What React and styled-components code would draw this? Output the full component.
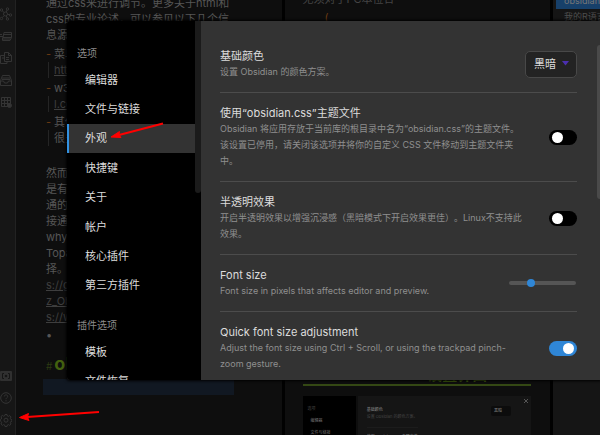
import React from "react";
import styled, { createGlobalStyle, css } from "styled-components";

const GlobalStyle = createGlobalStyle`
  *, *::before, *::after { box-sizing: border-box; }
  html, body, #root { height: 100%; }
  body {
    margin: 0;
    overflow: hidden;
    background: #010101;
    color: #565656;
    font-family: Inter, "Noto Sans CJK SC", sans-serif;
    font-size: 11px;
    line-height: 16px;
    text-spacing-trim: space-all;
  }
  button, select, input { font: inherit; color: inherit; margin: 0; }
`;

const App = styled.div`
  position: relative;
  display: flex;
  height: 100%;
  overflow: hidden;
`;

const Ribbon = styled.nav`
  flex: none;
  width: 16px;
  display: flex;
  flex-direction: column;
  justify-content: space-between;
  padding: 7px 0 8px;
  background: #161616;
  border-right: 1px solid #222;
`;

const RibbonGroup = styled.div`
  display: flex;
  flex-direction: column;
  gap: 8px;
`;

const RibbonButton = styled.button`
  display: block;
  width: 12px;
  height: 14px;
  padding: 0;
  border: 0;
  background: none;
  color: #343434;
  svg { display: block; width: 12px; height: 14px; }
`;

const Workspace = styled.div`
  flex: 1;
  min-width: 0;
  display: grid;
  grid-template-columns: 266fr 266fr 47fr;
  gap: 3px;
`;

const Pane = styled.section`
  min-width: 0;
  overflow: hidden;
  background: #0e0e0e;
`;

const Editor = styled(Pane)`
  padding: 0 30px;
  white-space: nowrap;
`;

const Block = styled.div`
  margin-top: ${(p) => p.$gap || 0}px;
`;

const ListItem = styled.div`
  position: relative;
  padding-left: 8px;
  margin-top: 2px;
  &::before {
    content: "-";
    position: absolute;
    left: 0;
    color: #6b3a12;
  }
`;

const Nested = styled.div`
  margin-left: 2px;
  padding-left: 5px;
  border-left: 1px solid #252525;
`;

const NoteLink = styled.a`
  color: #3e3e3e;
  text-decoration: underline;
`;

const NoteHeading = styled.h1`
  margin: 8px 0 0;
  color: #43600f;
  font-size: 18px;
  line-height: 26px;
  font-weight: 700;
  span { font-size: 10px; font-weight: 400; margin-right: 2px; color: #2c3a12; }
`;

const ActiveLine = styled.div`
  height: 16px;
  margin: 0 18px 0 -3px;
  background: #111822;
`;

const Preview = styled(Pane)`
  display: flex;
  flex-direction: column;
  justify-content: space-between;
  padding: 0 19px 0 18px;
`;

const PreviewText = styled.div`
  margin-top: -10px;
  color: #444;
  line-height: 18px;
  p { margin: 0; }
  p + p { padding-left: 22px; }
  i { color: #6b3a12; font-style: normal; }
`;

const PreviewTitle = styled.h2`
  margin: 0 0 10px;
  padding-left: 62px;
  border-bottom: 2px solid #344814;
  color: #43600f;
  font-size: 15px;
  line-height: 18px;
`;

const Thumb = styled.div`
  display: grid;
  grid-template-columns: 53fr 173fr;
  gap: 2px;
  height: 39px;
  font-size: 4px;
  line-height: 12px;
  color: #444;
`;

const ThumbNav = styled.div`
  padding: 7px 0 0 5px;
  background: #000;
  overflow: hidden;
  div + div { padding-left: 3px; color: #777; }
`;

const ThumbBody = styled.div`
  display: flex;
  justify-content: space-between;
  padding: 10px 2px 0 9px;
  background: #151515;
  line-height: 7px;
  overflow: hidden;
  white-space: nowrap;
  b { display: block; color: #888; font-weight: 400; }
  hr { margin: 7px 0 5px; border: 0; border-top: 1px solid #1c1c1c; }
`;

const ThumbControls = styled.div`
  display: flex;
  gap: 12px;
  align-items: flex-start;
  svg { width: 6px; height: 6px; margin-top: -8px; }
`;

const ThumbSelect = styled.div`
  width: 20px;
  height: 10px;
  padding: 1px 3px;
  border-radius: 2px;
  background: #0c0c0c;
  color: #888;
`;

const Outline = styled(Pane)`
  padding-left: 3px;
  background: #151515;
  white-space: nowrap;
  font-size: 9px;
`;

const OutlineItem = styled.div`
  padding-left: 8px;
  color: #4d4d4d;
  ${(p) =>
    p.$active &&
    css`
      height: 9px;
      line-height: 2px;
      background: #17406a;
      color: #777;
    `}
`;

const Modal = styled.div`
  position: absolute;
  inset: 21px 0 55px 67px;
  display: flex;
  overflow: hidden;
  border-radius: 3px 0 0 3px;
  background: #333;
  box-shadow: 0 0 3px 1px #000;
`;

const Sidebar = styled.nav`
  position: relative;
  flex: none;
  width: 134px;
  overflow: hidden;
  background: #000;
  color: #dcdcdc;
`;

const Thumbbar = styled.div`
  position: absolute;
  top: ${(p) => p.$top}px;
  right: 0;
  width: ${(p) => p.$width}px;
  height: ${(p) => p.$height}px;
  border-radius: ${(p) => p.$radius};
  background: ${(p) => p.$color};
`;

const GroupTitle = styled.h3`
  margin: 0;
  padding: ${(p) => p.$top}px 0 4px 10px;
  color: #8b8b8b;
  font-size: 10px;
  font-weight: 400;
`;

const TabList = styled.div`
  display: grid;
  grid-auto-rows: 1fr;
  min-height: ${(p) => p.$min}px;
`;

const Tab = styled.button`
  padding: 0 0 0 16px;
  border: 0;
  border-left: 2px solid ${(p) => (p.$active ? "#3291e0" : "transparent")};
  background: ${(p) => (p.$active ? "#333" : "none")};
  min-height: 29px;
  text-align: left;
`;

const Settings = styled.main`
  flex: 1;
  min-width: 0;
  overflow: hidden;
  padding: 15px 23px 0 19px;
`;

const Setting = styled.div`
  display: flex;
  align-items: center;
  justify-content: space-between;
  padding: 12px 0;
  & + & { border-top: 1px solid #4c4c4c; }
`;

const SettingText = styled.label`
  flex: 1;
  min-width: 0;
  white-space: nowrap;
`;

const SettingName = styled.span`
  display: block;
  color: #dcdcdc;
`;

const SettingDesc = styled.span`
  display: block;
  color: #8f8f8f;
  font-size: 9px;
`;

const SelectBox = styled.span`
  position: relative;
  flex: none;
  display: block;
  margin: -4px 0;
  svg {
    position: absolute;
    right: 8px;
    top: 10px;
    width: 7px;
    height: 5px;
    pointer-events: none;
  }
`;

const Select = styled.select`
  appearance: none;
  display: block;
  width: 52px;
  height: 27px;
  padding: 0 0 0 8px;
  border: 1px solid #484848;
  border-radius: 5px;
  background: #232323;
  color: #dcdcdc;
`;

const Toggle = styled.input`
  appearance: none;
  flex: none;
  width: 28px;
  height: 15px;
  padding: 2px 3px;
  border-radius: 8px;
  background: #000;
  display: flex;
  justify-content: flex-start;
  &::before {
    content: "";
    width: 11px;
    height: 11px;
    border-radius: 50%;
    background: #fff;
  }
  &:checked { background: #2f86d6; justify-content: flex-end; }
`;

const Slider = styled.input`
  appearance: none;
  flex: none;
  width: 67px;
  height: 4px;
  margin-right: 1px;
  border-radius: 2px;
  background: #555;
  &::-webkit-slider-thumb {
    appearance: none;
    width: 8px;
    height: 8px;
    border-radius: 50%;
    background: #2f86d6;
  }
`;

const Arrows = styled.svg`
  position: absolute;
  left: 0;
  top: 0;
  pointer-events: none;
`;

const stroke = { fill: "none", stroke: "currentColor", strokeWidth: 1 };

const icons = {
  graph: (
    <g {...stroke}>
      <circle cx="5.5" cy="7" r="2" />
      <circle cx="1.5" cy="3" r="1.2" />
      <circle cx="7.5" cy="2" r="1.2" />
      <circle cx="10.5" cy="8" r="1.2" />
      <circle cx="1.5" cy="11.5" r="1.2" />
      <circle cx="7.5" cy="12" r="1.2" />
      <path d="M2.3 4l2 1.6M7 3.1L6.2 5M7.6 7.3l1.7.4M4.2 8.6l-2 2M6.3 9l.8 2" />
    </g>
  ),
  switcher: (
    <g {...stroke}>
      <path d="M4 3.5h7.5v5H3zM3 5.5h8M0 7.5h3M0 5.5h2M2.5 8.500v3H10l1.500-3M3 10h7" />
    </g>
  ),
  files: (
    <g {...stroke}>
      <path d="M4.5 1.5h4l3 3v6h-7zM8.5 1.5v3h3M.5 4.5h4M.5 4.5v8h6.5v-2M2 7h2M6 6.5h3M6 8.5h3" />
    </g>
  ),
  inbox: (
    <g {...stroke}>
      <path d="M2.5 2.5h7l2 5v5H.5v-5zM.5 8h3l1 2h3l1-2h3M2 5h8M2 6.5h8" />
    </g>
  ),
  table: (
    <g {...stroke}>
      <path d="M1.5 2.5h9v9h-9zM1.5 5.5h9M1.5 8.5h9M4.5 2.5v9M7.5 2.5v9" />
      <circle cx="9.5" cy="10.5" r="2" fill="currentColor" />
    </g>
  ),
  vault: (
    <g>
      <rect x="0" y="2" width="12" height="10" rx="1" fill="#303030" />
      <path d="M4 4.5H2.5v5H4M8 4.5h1.5v5H8" fill="none" stroke="#151515" />
      <circle cx="6" cy="7" r="1.3" fill="#151515" />
    </g>
  ),
  help: (
    <g {...stroke}>
      <circle cx="6" cy="7" r="5.3" />
      <path d="M4.3 5.5c0-2.3 3.5-2 3.4 0 0 1.2-1.7 1.2-1.7 2.7M6 9.2v1.2" />
    </g>
  ),
  gear: (
    <g {...stroke}>
      <path d="M5 1.5h2l.4 1.5 1 .4 1.3-.8 1.400 1.400-.8 1.300.4 1 1.200.4v1.600l-1.200.4-.4 1 .8 1.300-1.400 1.400-1.300-.8-1 .4-.4 1.500H5l-.4-1.500-1-.4-1.300.8L.9 11l.8-1.300-.4-1L.3 8V6.400l1-.4.4-1L.9 3.700 2.300 2.400l1.300.8 1-.4z" />
      <circle cx="6" cy="7.2" r="2" />
    </g>
  ),
};

function RibbonIcon({ name, label }) {
  return (
    <RibbonButton type="button" aria-label={label}>
      <svg viewBox="0 0 12 14">{icons[name]}</svg>
    </RibbonButton>
  );
}

function SettingRow({ id, name, lines, children }) {
  return (
    <Setting>
      <SettingText htmlFor={id}>
        <SettingName>{name}</SettingName>
        {lines.map((line) => (
          <SettingDesc key={line}>{line}</SettingDesc>
        ))}
      </SettingText>
      {children}
    </Setting>
  );
}

const tabs = ["编辑器", "文件与链接", "外观", "快捷键", "关于", "帐户", "核心插件", "第三方插件"];
const pluginTabs = ["模板", "文件恢复"];

export default function SettingsScreen() {
  return (
    <App>
      <GlobalStyle />
      <Ribbon>
        <RibbonGroup>
          <RibbonIcon name="graph" label="关系图谱" />
          <RibbonIcon name="switcher" label="快速切换" />
          <RibbonIcon name="files" label="模板" />
          <RibbonIcon name="inbox" label="收件箱" />
          <RibbonIcon name="table" label="表格" />
        </RibbonGroup>
        <RibbonGroup>
          <RibbonIcon name="vault" label="打开其他库" />
          <RibbonIcon name="help" label="帮助" />
          <RibbonIcon name="gear" label="设置" />
        </RibbonGroup>
      </Ribbon>

      <Workspace>
        <Editor>
          <Block $gap={-5}>
            <div>通过css来进行调节。更多关于html和</div>
            <div>css的专业论述，可以参见以下几个信</div>
            <div>息源</div>
          </Block>
          <Block $gap={3}>
            <ListItem>菜鸟</ListItem>
            <Nested><NoteLink href="#runoob">https</NoteLink></Nested>
            <ListItem>w3c</ListItem>
            <Nested><NoteLink href="#w3c">l.com</NoteLink></Nested>
            <ListItem>其他</ListItem>
            <Nested>很多</Nested>
          </Block>
          <Block $gap={19}>
            <div>然而</div>
            <div>是有</div>
            <div>通的</div>
            <div>接通</div>
            <div>why</div>
            <div>Topa</div>
            <div>择。</div>
            <NoteLink href="#g">s://g</NoteLink><br />
            <NoteLink href="#z">z_Ob</NoteLink><br />
            <NoteLink href="#w">s://w</NoteLink>
          </Block>
          <Block $gap={2}>•</Block>
          <NoteHeading><span>#</span>obsidian</NoteHeading>
          <ActiveLine />
        </Editor>

        <Preview>
          <PreviewText>
            <p>无须对于PC本位合</p>
            <p><i>(</i></p>
          </PreviewText>
          <div>
            <PreviewTitle>obsidian设置界面</PreviewTitle>
            <Thumb>
              <ThumbNav>
                <div>选项</div>
                <div>编辑器</div>
                <div>文件与链接</div>
              </ThumbNav>
              <ThumbBody>
                <div>
                  <b>基础颜色</b>
                  设置 Obsidian 的颜色方案。
                  <hr />
                  <b>使用“obsidian.css”主题文件</b>
                </div>
                <ThumbControls>
                  <ThumbSelect>黑暗</ThumbSelect>
                  <svg viewBox="0 0 6 6"><path d="M1 1l4 4M5 1L1 5" stroke="#555" /></svg>
                </ThumbControls>
              </ThumbBody>
            </Thumb>
          </div>
        </Preview>

        <Outline>
          <OutlineItem $active>obsidian主题</OutlineItem>
          <OutlineItem>我的R语言</OutlineItem>
        </Outline>
      </Workspace>

      <Modal role="dialog" aria-label="设置">
        <Sidebar>
          <GroupTitle $top={24}>选项</GroupTitle>
          <TabList $min={235}>
            {tabs.map((t) => (
              <Tab key={t} type="button" $active={t === "外观"}>{t}</Tab>
            ))}
          </TabList>
          <GroupTitle $top={17}>插件选项</GroupTitle>
          <TabList $min={58}>
            {pluginTabs.map((t) => (
              <Tab key={t} type="button">{t}</Tab>
            ))}
          </TabList>
          <Thumbbar $top={0} $width={6} $height={172} $radius="0 0 3px 3px" $color="#1b1b1b" />
        </Sidebar>
        <Settings>
          <SettingRow id="scheme" name="基础颜色" lines={["设置 Obsidian 的颜色方案。"]}>
            <SelectBox>
              <Select id="scheme" defaultValue="dark">
                <option value="dark">黑暗</option>
                <option value="light">明亮</option>
              </Select>
              <svg viewBox="0 0 7 5"><path d="M0 0h7L3.5 4.5z" fill="#4b2fb0" /></svg>
            </SelectBox>
          </SettingRow>
          <SettingRow
            id="theme"
            name="使用“obsidian.css”主题文件"
            lines={[
              "Obsidian 将应用存放于当前库的根目录中名为“obsidian.css”的主题文件。",
              "该设置已停用，请关闭该选项并将你的自定义 CSS 文件移动到主题文件夹",
              "中。",
            ]}
          >
            <Toggle id="theme" type="checkbox" />
          </SettingRow>
          <SettingRow
            id="translucent"
            name="半透明效果"
            lines={["开启半透明效果以增强沉浸感（黑暗模式下开启效果更佳）。Linux不支持此", "效果。"]}
          >
            <Toggle id="translucent" type="checkbox" />
          </SettingRow>
          <SettingRow id="size" name="Font size" lines={["Font size in pixels that affects editor and preview."]}>
            <Slider id="size" type="range" min="10" max="30" defaultValue="16" />
          </SettingRow>
          <SettingRow
            id="quick"
            name="Quick font size adjustment"
            lines={["Adjust the font size using Ctrl + Scroll, or using the trackpad pinch-", "zoom gesture."]}
          >
            <Toggle id="quick" type="checkbox" defaultChecked />
          </SettingRow>
        </Settings>
        <Thumbbar $top={24} $width={3} $height={154} $radius="3px 0 0 3px" $color="#4a4a4a" />
      </Modal>

      <Arrows width="170" height="435" viewBox="0 0 170 435" aria-hidden="true">
        <g fill="#f00" stroke="#f00">
          <path d="M163 123.5L119 135" strokeWidth="2" />
          <path d="M111 137l8.5-5.5-.5 3.5 2 2.5z" strokeWidth="1" />
          <path d="M99 412L27 417" strokeWidth="2" />
          <path d="M19.5 417.5l9-4-1 3.5 1.5 3.5z" strokeWidth="1" />
        </g>
      </Arrows>
    </App>
  );
}
